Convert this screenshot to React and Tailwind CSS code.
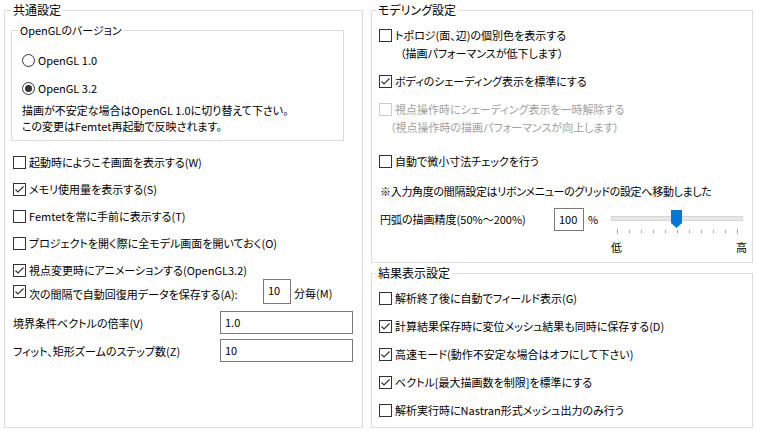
const generalOptions = [
  { label: "起動時にようこそ画面を表示する(W)", checked: false },
  { label: "メモリ使用量を表示する(S)", checked: true },
  { label: "Femtetを常に手前に表示する(T)", checked: false },
  { label: "プロジェクトを開く際に全モデル画面を開いておく(O)", checked: false },
  { label: "視点変更時にアニメーションする(OpenGL3.2)", checked: true },
];

const resultOptions = [
  { label: "解析終了後に自動でフィールド表示(G)", checked: false },
  { label: "計算結果保存時に変位メッシュ結果も同時に保存する(D)", checked: true },
  { label: "高速モード(動作不安定な場合はオフにして下さい)", checked: true },
  { label: "ベクトル[最大描画数を制限]を標準にする", checked: true },
  { label: "解析実行時にNastran形式メッシュ出力のみ行う", checked: false },
];

function CheckBox({ checked, disabled }) {
  return (
    <span
      className={`flex h-[13px] w-[13px] shrink-0 items-center justify-center border bg-white ${
        disabled ? "border-[#cccccc]" : "border-[#333333]"
      }`}
    >
      {checked && (
        <svg width="11" height="11" viewBox="0 0 11 11">
          <polyline
            points="1.5,5.5 4,8 9.5,2.5"
            fill="none"
            stroke="#333333"
            strokeWidth="1.2"
          />
        </svg>
      )}
    </span>
  );
}

function CheckRow({ label, checked, disabled, className = "" }) {
  return (
    <div className={`flex h-[18px] items-center gap-[3px] ${className}`}>
      <CheckBox checked={checked} disabled={disabled} />
      <span className={`whitespace-nowrap ${disabled ? "text-[#a0a0a0]" : ""}`}>{label}</span>
    </div>
  );
}

function Radio({ label, selected, className = "" }) {
  return (
    <div className={`flex h-[18px] items-center gap-[3px] ${className}`}>
      <span className="flex h-[13px] w-[13px] items-center justify-center rounded-full border border-[#333333] bg-white">
        {selected && <span className="h-[7px] w-[7px] rounded-full bg-[#333333]" />}
      </span>
      <span>{label}</span>
    </div>
  );
}

function Field({ value, className = "" }) {
  return (
    <div className={`border border-[#7a7a7a] bg-white pl-[4px] pt-[1px] leading-[18px] ${className}`}>
      {value}
    </div>
  );
}

function Slider() {
  const ticks = Array.from({ length: 11 }, (_, i) => 6 + i * 12);

  return (
    <div className="flex w-[136px] flex-col">
      <svg width="132" height="30" viewBox="0 0 132 30">
        <rect x="0.5" y="8.5" width="131" height="4" fill="#e7e7e7" stroke="#d6d6d6" />
        {ticks.map((x, i) => (
          <line
            key={x}
            x1={x + 0.5}
            x2={x + 0.5}
            y1={i === 0 || i === 10 ? 21 : 22}
            y2={i === 0 || i === 10 ? 26 : 25}
            stroke="#a8a8a8"
          />
        ))}
        <path d="M60 2 H71 V15 L65.5 20 L60 15 Z" fill="#0078d7" />
      </svg>
      <div className="flex justify-between">
        <span>低</span>
        <span>高</span>
      </div>
    </div>
  );
}

export default function App() {
  return (
    <div className="flex h-[434px] w-[757px] gap-[8px] bg-white pl-[4px] pt-[1px] font-['Noto_Sans_CJK_JP',sans-serif] text-[11px] leading-[18px] text-black [font-feature-settings:'palt']">
      <fieldset className="h-[427px] w-[359px] border border-[#dcdcdc]">
        <legend className="ml-[6px] px-[2px] text-[12px] leading-[18px]">共通設定</legend>
        <div className="flex flex-col pl-[6px]">
          <fieldset className="mt-[2px] w-[333px] border border-[#dcdcdc]">
            <legend className="ml-[6px] px-[2px] leading-[18px]">OpenGLのバージョン</legend>
            <div className="flex flex-col pb-[6px] pl-[10px] pt-[12px]">
              <Radio label="OpenGL 1.0" />
              <Radio label="OpenGL 3.2" selected className="mt-[10px]" />
              <p className="mt-[5px] leading-[16px]">
                描画が不安定な場合はOpenGL 1.0に切り替えて下さい。
                <br />
                この変更はFemtet再起動で反映されます。
              </p>
            </div>
          </fieldset>

          <div className="mt-[12px] flex flex-col gap-[9px] pl-[2px]">
            {generalOptions.map((item) => (
              <CheckRow key={item.label} label={item.label} checked={item.checked} />
            ))}
          </div>

          <div className="mt-0 flex h-[25px] items-center pl-[2px]">
            <CheckBox checked />
            <span className="ml-[3px] w-[234px] whitespace-nowrap pt-[4px]">
              次の間隔で自動回復用データを保存する(A):
            </span>
            <div className="h-[25px] w-[28px] border border-[#7a7a7a] bg-white pl-[4px] pt-[1px] leading-[18px]">
              10
            </div>
            <span className="ml-[3px] pt-[2px]">分毎(M)</span>
          </div>

          <div className="mt-[7px] flex items-center pl-[2px]">
            <span className="w-[207px]">境界条件ベクトルの倍率(V)</span>
            <Field value="1.0" className="h-[23px] w-[133px]" />
          </div>
          <div className="mt-[5px] flex items-center pl-[2px]">
            <span className="w-[207px]">フィット、矩形ズームのステップ数(Z)</span>
            <Field value="10" className="h-[23px] w-[133px]" />
          </div>
        </div>
      </fieldset>

      <div className="flex w-[382px] flex-col gap-[1px]">
        <fieldset className="h-[262px] border border-[#dcdcdc]">
          <legend className="ml-[4px] px-[2px] text-[12px] leading-[18px]">モデリング設定</legend>
          <div className="flex flex-col pl-[7px] pt-[7px]">
            <CheckRow label="トポロジ(面、辺)の個別色を表示する" />
            <span className="pl-[21px]">（描画パフォーマンスが低下します）</span>
            <CheckRow label="ボディのシェーディング表示を標準にする" checked className="mt-[10px]" />
            <CheckRow label="視点操作時にシェーディング表示を一時解除する" disabled className="mt-[10px]" />
            <span className="pl-[11px] text-[#a0a0a0]">（視点操作時の描画パフォーマンスが向上します）</span>
            <CheckRow label="自動で微小寸法チェックを行う" className="mt-[16px]" />
            <span className="mt-[12px] whitespace-nowrap pl-[1px] tracking-[-0.3px]">
              ※入力角度の間隔設定はリボンメニューのグリッドの設定へ移動しました
            </span>
            <div className="mt-[8px] flex items-start pl-[1px]">
              <span className="mt-[2px] w-[174px] whitespace-nowrap">円弧の描画精度(50%～200%)</span>
              <Field value="100" className="h-[23px] w-[30px]" />
              <span className="ml-[4px] mt-[2px] w-[23px]">%</span>
              <Slider />
            </div>
          </div>
        </fieldset>

        <fieldset className="h-[164px] border border-[#dcdcdc]">
          <legend className="ml-[4px] px-[2px] text-[12px] leading-[18px]">結果表示設定</legend>
          <div className="flex flex-col gap-[10px] pl-[7px] pt-[7px]">
            {resultOptions.map((item) => (
              <CheckRow key={item.label} label={item.label} checked={item.checked} />
            ))}
          </div>
        </fieldset>
      </div>
    </div>
  );
}
